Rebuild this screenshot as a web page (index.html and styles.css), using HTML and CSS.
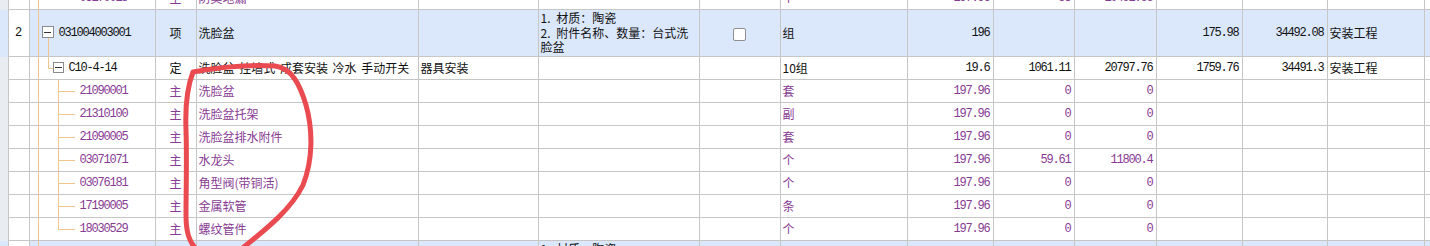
FILE: index.html
```html
<!DOCTYPE html>
<html>

<head>
  <meta charset="utf-8">
  <title>清单定额</title>

  <link rel="stylesheet" href="styles.css">

</head>

<body>

  <div class="sheet">

    <table class="grid">
      <colgroup>
        <col style="width: 8px">
        <col style="width: 21px">
        <col style="width: 126px">
        <col style="width: 41px">
        <col style="width: 222px">
        <col style="width: 120px">
        <col style="width: 161px">
        <col style="width: 81px">
        <col style="width: 127px">
        <col style="width: 86px">
        <col style="width: 81px">
        <col style="width: 82px">
        <col style="width: 86px">
        <col style="width: 85px">
        <col style="width: 97px">
        <col style="width: 50px">
      </colgroup>

      <!-- last material of the previous item, cut off at the top -->
      <tr class="sub">
        <td class="gutter"></td><td class="rownum"></td>
        <td class="code tree-leaf last">03170015</td><td class="mid">主</td><td>防臭地漏</td><td></td><td></td><td></td>
        <td>个</td><td class="num">197.96</td><td class="num">53</td><td class="num">10491.88</td><td></td><td></td><td></td><td></td>
      </tr>

      <tr class="item">
        <td class="gutter"></td><td class="rownum">2</td>
        <td class="code tree-item"><span class="toggle"></span>031004003001</td><td class="mid">项</td><td>洗脸盆</td><td></td>
        <td class="desc">1. 材质：陶瓷<br>2. 附件名称、数量：台式洗<br>脸盆</td>
        <td class="mid"><span class="check"></span></td>
        <td>组</td><td class="num">196</td><td></td><td></td><td class="num">175.98</td><td class="num">34492.08</td><td>安装工程</td><td></td>
      </tr>

      <tr class="norm">
        <td class="gutter"></td><td class="rownum"></td>
        <td class="code tree-norm"><span class="toggle small"></span>C10-4-14</td><td class="mid">定</td>
        <td class="spaced">洗脸盆 挂墙式 成套安装 冷水 手动开关</td><td>器具安装</td><td></td><td></td>
        <td>10组</td><td class="num">19.6</td><td class="num">1061.11</td><td class="num">20797.76</td><td class="num">1759.76</td><td class="num">34491.3</td><td>安装工程</td><td></td>
      </tr>

      <tr class="sub">
        <td class="gutter"></td><td class="rownum"></td>
        <td class="code tree-leaf">21090001</td><td class="mid">主</td><td>洗脸盆</td><td></td><td></td><td></td>
        <td>套</td><td class="num">197.96</td><td class="num">0</td><td class="num">0</td><td></td><td></td><td></td><td></td>
      </tr>
      <tr class="sub">
        <td class="gutter"></td><td class="rownum"></td>
        <td class="code tree-leaf">21310100</td><td class="mid">主</td><td>洗脸盆托架</td><td></td><td></td><td></td>
        <td>副</td><td class="num">197.96</td><td class="num">0</td><td class="num">0</td><td></td><td></td><td></td><td></td>
      </tr>
      <tr class="sub">
        <td class="gutter"></td><td class="rownum"></td>
        <td class="code tree-leaf">21090005</td><td class="mid">主</td><td>洗脸盆排水附件</td><td></td><td></td><td></td>
        <td>套</td><td class="num">197.96</td><td class="num">0</td><td class="num">0</td><td></td><td></td><td></td><td></td>
      </tr>
      <tr class="sub">
        <td class="gutter"></td><td class="rownum"></td>
        <td class="code tree-leaf">03071071</td><td class="mid">主</td><td>水龙头</td><td></td><td></td><td></td>
        <td>个</td><td class="num">197.96</td><td class="num">59.61</td><td class="num">11800.4</td><td></td><td></td><td></td><td></td>
      </tr>
      <tr class="sub">
        <td class="gutter"></td><td class="rownum"></td>
        <td class="code tree-leaf">03076181</td><td class="mid">主</td><td>角型阀(带铜活)</td><td></td><td></td><td></td>
        <td>个</td><td class="num">197.96</td><td class="num">0</td><td class="num">0</td><td></td><td></td><td></td><td></td>
      </tr>
      <tr class="sub">
        <td class="gutter"></td><td class="rownum"></td>
        <td class="code tree-leaf">17190005</td><td class="mid">主</td><td>金属软管</td><td></td><td></td><td></td>
        <td>条</td><td class="num">197.96</td><td class="num">0</td><td class="num">0</td><td></td><td></td><td></td><td></td>
      </tr>
      <tr class="sub">
        <td class="gutter"></td><td class="rownum"></td>
        <td class="code tree-leaf last">18030529</td><td class="mid">主</td><td>螺纹管件</td><td></td><td></td><td></td>
        <td>个</td><td class="num">197.96</td><td class="num">0</td><td class="num">0</td><td></td><td></td><td></td><td></td>
      </tr>

      <!-- next item, only its top edge shows -->
      <tr class="item">
        <td class="gutter"></td><td class="rownum">3</td>
        <td class="code tree-item"><span class="toggle"></span>031004003002</td><td class="mid">项</td><td>洗脸盆</td><td></td>
        <td class="desc">1. 材质：陶瓷<br>2. 附件名称、数量：立式洗<br>脸盆</td>
        <td class="mid"><span class="check"></span></td>
        <td>组</td><td class="num">12</td><td></td><td></td><td></td><td></td><td>安装工程</td><td></td>
      </tr>
    </table>

    <!-- hand-drawn red mark over the materials -->
    <svg class="mark" width="1430" height="246" viewBox="0 0 1430 246">
      <path d="M 197 250 C 189 242, 186 232, 186 215 C 186 190, 187 160, 186 130 C 185 105, 188 85, 193 72 C 215 68, 245 64, 275 66 C 292 68, 300 85, 306 105 C 313 130, 313 160, 303 185 C 292 208, 268 228, 240 250" />
    </svg>

  </div>

</body>

</html>
```

FILE: styles.css
```css
body {
  margin: 0;
  background: white;
  color: #111;
  font-family: "Noto Sans CJK SC", sans-serif;
  font-size: 12px;
}

/* Window onto the grid; the rows above and below are cut off. */
.sheet {
  position: relative;
  height: 246px;
  overflow: hidden;
}

.grid {
  border-collapse: collapse;
  table-layout: fixed;
  width: 1474px;
  margin-top: -14px;
}

.grid tr {
  height: 23px;
}

.grid td {
  border: 1px solid #c6c6c6;
  padding: 0 2px;
  line-height: 14px;
  white-space: nowrap;
  overflow: hidden;
  vertical-align: middle;
}

/* Row header strip on the far left. */
.grid td.gutter {
  border-top: none;
  border-bottom: none;
  border-left: none;
  background: #e9ecf1;
  padding: 0;
}

.grid .item {
  height: 47px;
}

/* Highlighted bill item, the row number cell stays white. */
.grid .item td {
  background-color: #dbe7fb;
}

.grid .item td.rownum {
  background-color: white;
}

.rownum {
  text-align: center;
  font-family: "Liberation Mono", monospace;
  font-size: 12px;
}

.mid {
  text-align: center;
}

.sub td {
  color: #873c93;
}

.num {
  text-align: right;
  font-family: "Liberation Mono", monospace;
  font-size: 12px;
  letter-spacing: -1.2px;
}

.grid td.num {
  padding-right: 3px;
}

.code {
  font-family: "Liberation Mono", monospace;
  font-size: 12px;
  letter-spacing: -1.2px;
}

.spaced {
  word-spacing: 2px;
}

.grid td.desc {
  vertical-align: top;
  white-space: normal;
  line-height: 14.5px;
  word-spacing: 3px;
  padding-top: 1px;
}

/* Tree guide lines drawn into the code cell. */
.tree-item,
.tree-norm,
.tree-leaf {
  background-repeat: no-repeat;
}

.grid td.tree-item {
  padding-left: 12px;
  background-image: linear-gradient(#f1c68c, #f1c68c), linear-gradient(#f1c68c, #f1c68c);
  background-position: 8px 0, 18px 100%;
  background-size: 1px 100%, 1px 50%;
}

.grid td.tree-norm {
  padding-left: 23px;
  background-image: linear-gradient(#f1c68c, #f1c68c), linear-gradient(#f1c68c, #f1c68c), linear-gradient(#f1c68c, #f1c68c);
  background-position: 8px 0, 18px 0, 18px 50%;
  background-size: 1px 100%, 1px 50%, 5px 1px;
}

.grid td.tree-leaf {
  padding-left: 50px;
  background-image: linear-gradient(#f1c68c, #f1c68c), linear-gradient(#f1c68c, #f1c68c), linear-gradient(#f1c68c, #f1c68c);
  background-position: 8px 0, 28px 0, 28px 50%;
  background-size: 1px 100%, 1px 100%, 17px 1px;
}

.grid td.tree-leaf.last {
  background-size: 1px 100%, 1px 50%, 17px 1px;
}

/* Collapse box with a minus sign. */
.toggle {
  display: inline-block;
  box-sizing: border-box;
  width: 12px;
  height: 12px;
  margin-right: 5px;
  border: 1px solid #8b8b8b;
  background: white linear-gradient(#333, #333) center / 7px 1px no-repeat;
  vertical-align: -2px;
}

.toggle.small {
  width: 11px;
  height: 11px;
}

.check {
  display: inline-block;
  box-sizing: border-box;
  width: 13px;
  height: 13px;
  border: 1px solid #8e8e8e;
  border-radius: 2px;
  background: white;
  vertical-align: middle;
}

.mark {
  position: absolute;
  top: 0;
  left: 0;
  pointer-events: none;
}

.mark path {
  fill: none;
  stroke: #e94b50;
  stroke-width: 5;
  stroke-linecap: round;
  stroke-linejoin: round;
}
```
